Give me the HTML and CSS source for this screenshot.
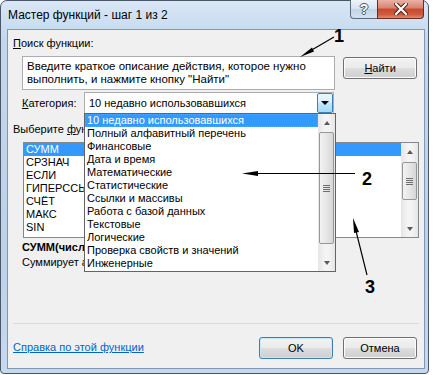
FILE: index.html
```html
<!DOCTYPE html>
<html lang="ru">
<head>
    <meta charset="UTF-8">
    <title>Мастер функций - шаг 1 из 2</title>
    <link rel="stylesheet" href="styles.css">
</head>
<body>
    <div class="dialog">
        <div class="titlebar">
            <span class="title">Мастер функций - шаг 1 из 2</span>
            <div class="caption-buttons">
                <span class="cap help">?</span>
                <span class="cap close">
                    <svg width="14" height="12" viewBox="0 0 14 12">
                        <path d="M2 1 L12 11 M12 1 L2 11" stroke="#4a2018" stroke-width="4.2" stroke-linecap="square"/>
                        <path d="M2 1 L12 11 M12 1 L2 11" stroke="#ffffff" stroke-width="2.2" stroke-linecap="square"/>
                    </svg>
                </span>
            </div>
        </div>

        <div class="client">
            <div class="label"><u>П</u>оиск функции:</div>

            <div class="search-row">
                <div class="textbox">Введите краткое описание действия, которое нужно выполнить, и нажмите кнопку "Найти"</div>
                <button class="btn find-btn"><u>Н</u>айти</button>
            </div>

            <div class="category-row">
                <span class="category-label"><u>К</u>атегория:</span>
                <div class="combo">
                    <span class="combo-text">10 недавно использовавшихся</span>
                    <span class="drop-btn"></span>
                </div>
            </div>

            <div class="label label-gap">Выберите <u>ф</u>ункцию:</div>

            <div class="listbox">
                <div class="items">
                    <div class="item selected">СУММ</div>
                    <div class="item">СРЗНАЧ</div>
                    <div class="item">ЕСЛИ</div>
                    <div class="item">ГИПЕРССЫЛКА</div>
                    <div class="item">СЧЁТ</div>
                    <div class="item">МАКС</div>
                    <div class="item">SIN</div>
                </div>
                <div class="scrollbar small">
                    <span class="arrow up"></span>
                    <div class="track"><div class="thumb"><span class="grip"></span></div></div>
                    <span class="arrow down"></span>
                </div>
            </div>

            <div class="signature">СУММ(число1;число2;...)</div>
            <div class="desc">Суммирует аргументы.</div>

            <div class="spacer"></div>
            <div class="separator"></div>

            <div class="footer">
                <a href="#" class="help-link">Справка по этой функции</a>
                <div class="buttons">
                    <button class="btn default">OK</button>
                    <button class="btn">Отмена</button>
                </div>
            </div>

            <!-- раскрытый список категорий поверх окна -->
            <div class="dropdown">
                <div class="items">
                    <div class="item selected focused">10 недавно использовавшихся</div>
                    <div class="item">Полный алфавитный перечень</div>
                    <div class="item">Финансовые</div>
                    <div class="item">Дата и время</div>
                    <div class="item">Математические</div>
                    <div class="item">Статистические</div>
                    <div class="item">Ссылки и массивы</div>
                    <div class="item">Работа с базой данных</div>
                    <div class="item">Текстовые</div>
                    <div class="item">Логические</div>
                    <div class="item">Проверка свойств и значений</div>
                    <div class="item">Инженерные</div>
                </div>
                <div class="scrollbar large">
                    <span class="arrow up"></span>
                    <div class="track"><div class="thumb"><span class="grip"></span></div></div>
                    <span class="arrow down"></span>
                </div>
            </div>
        </div>

        <!-- выноски 1, 2, 3 -->
        <svg class="callouts" width="430" height="374" viewBox="0 0 430 374">
            <g stroke="#000" stroke-width="1.2">
                <line x1="334" y1="37" x2="310" y2="51"/>
                <line x1="355" y1="173.5" x2="256" y2="173.5"/>
                <line x1="367" y1="275" x2="356" y2="231"/>
            </g>
            <g fill="#000">
                <polygon points="300,57 312,47.5 314,51.5"/>
                <polygon points="242,173.5 258,171 258,176"/>
                <polygon points="353,218 354,233 359,232"/>
            </g>
            <g class="callout-num">
                <text x="334" y="42">1</text>
                <text x="362" y="185">2</text>
                <text x="365" y="293">3</text>
            </g>
        </svg>
    </div>
</body>
</html>
```

FILE: styles.css
```css
/* общие */
body {
    margin: 0;
    background: #ffffff;
    font-family: "Liberation Sans", Arial, sans-serif;
    font-size: 11px;
    color: #000000;
}

u {
    text-decoration: underline;
    text-underline-offset: 1px;
}

/* рамка окна */
.dialog {
    position: relative;
    width: 429px;
    height: 374px;
    box-sizing: border-box;
    border: 1px solid #4b5766;
    border-radius: 7px 7px 4px 4px;
    padding: 0 3px 4px 6px;
    background: linear-gradient(#d9e7f6, #c3d7ee 40px, #bcd2ea 70%, #c5d9ef);
    display: flex;
    flex-direction: column;
}

.titlebar {
    height: 28px;
    display: flex;
    justify-content: space-between;
    align-items: flex-start;
}

.title {
    margin-top: 7px;
    margin-left: 1px;
    font-size: 12px;
    line-height: 15px;
}

.caption-buttons {
    display: flex;
    margin-top: -1px;
    margin-right: 1px;
}

.cap {
    height: 19px;
    box-sizing: border-box;
    border: 1px solid #5a6a80;
    border-top: none;
    display: flex;
    align-items: center;
    justify-content: center;
}

.help {
    width: 27px;
    border-radius: 0 0 0 4px;
    border-right: none;
    background: linear-gradient(#edf3fa, #d6e2ef 50%, #c3d3e6 51%, #d3e1ef);
    color: #ffffff;
    font-weight: bold;
    font-size: 14px;
    text-shadow: 1px 0 #445266, -1px 0 #445266, 0 1px #445266, 0 -1px #445266;
}

.close {
    width: 47px;
    border-radius: 0 0 4px 0;
    border-color: #6b2a22;
    background: linear-gradient(#eab2a6, #d9826f 45%, #c7482f 50%, #cf5a3e 80%, #e08d6a);
}

/* клиентская область */
.client {
    position: relative;
    flex: 1;
    border: 1px solid #8196b0;
    background: #f0f0f0;
    display: flex;
    flex-direction: column;
    padding: 6px 7px 9px 5px;
}

.label {
    line-height: 15px;
}

.label-gap {
    margin-top: 8px;
}

.search-row {
    display: flex;
    align-items: flex-start;
    margin-top: 5px;
    padding-left: 9px;
}

.textbox {
    width: 314px;
    height: 34px;
    box-sizing: border-box;
    border: 1px solid #abadb3;
    background: #ffffff;
    padding: 3px 4px;
    line-height: 13px;
    font-size: 11.5px;
}

.btn {
    width: 74px;
    height: 22px;
    box-sizing: border-box;
    border: 1px solid #707070;
    border-radius: 3px;
    background: linear-gradient(#f2f2f2, #ebebeb 50%, #dddddd 51%, #cfcfcf);
    font-family: inherit;
    font-size: 11px;
    color: #000000;
    padding: 0;
    box-shadow: inset 0 0 0 1px #fcfcfc;
}

.find-btn {
    margin-left: 8px;
    margin-top: 1px;
}

.category-row {
    display: flex;
    align-items: center;
    margin-top: 2px;
    padding-left: 9px;
}

.category-label {
    width: 62px;
}

.combo {
    width: 250px;
    height: 22px;
    box-sizing: border-box;
    border: 1px solid #abadb3;
    background: #ffffff;
    display: flex;
    align-items: center;
    justify-content: space-between;
    padding-left: 4px;
}

.drop-btn {
    position: relative;
    width: 16px;
    height: 20px;
    box-sizing: border-box;
    border: 1px solid #3c7fb1;
    border-radius: 2px;
    background: linear-gradient(#eaf6fd, #d9f0fc 45%, #bee6fd 50%, #a7d9f5);
}

.drop-btn::after {
    content: "";
    position: absolute;
    left: 3px;
    top: 7px;
    border-left: 4px solid transparent;
    border-right: 4px solid transparent;
    border-top: 4px solid #000000;
}

/* списки */
.listbox {
    width: 396px;
    height: 96px;
    box-sizing: border-box;
    margin-top: 5px;
    margin-left: 10px;
    border: 1px solid #828790;
    background: #ffffff;
    display: flex;
}

.items {
    flex: 1;
    overflow: hidden;
}

.item {
    height: 13px;
    line-height: 13px;
    padding-left: 2px;
    white-space: nowrap;
}

.item.selected {
    background: #3399ff;
    color: #ffffff;
}

.item.focused {
    box-sizing: border-box;
    border: 1px dotted #d88a3c;
    line-height: 11px;
    padding-left: 1px;
}

.scrollbar {
    width: 17px;
    display: flex;
    flex-direction: column;
    background: linear-gradient(90deg, #e6e6e6, #f4f4f4 40%, #f4f4f4 60%, #e6e6e6);
}

.arrow {
    height: 17px;
    display: flex;
    align-items: center;
    justify-content: center;
}

.arrow::after {
    content: "";
    border-left: 3.5px solid transparent;
    border-right: 3.5px solid transparent;
}

.arrow.up::after {
    border-bottom: 4px solid #5a5a5a;
}

.arrow.down::after {
    border-top: 4px solid #5a5a5a;
}

.track {
    flex: 1;
}

.thumb {
    margin: 0 1px;
    box-sizing: border-box;
    border: 1px solid #979797;
    border-radius: 2px;
    background: linear-gradient(90deg, #f2f2f2, #e6e6e6 50%, #d6d6d6);
    display: flex;
    align-items: center;
    justify-content: center;
}

.grip {
    width: 7px;
    height: 7px;
    background: repeating-linear-gradient(#6e6e6e 0 1px, transparent 1px 2px);
}

.small .thumb {
    margin-top: 2px;
    height: 38px;
}

.large .thumb {
    margin-top: 1px;
    height: 112px;
}

.signature {
    margin-top: 2px;
    margin-left: 9px;
    font-weight: bold;
    line-height: 15px;
}

.desc {
    margin-left: 9px;
    line-height: 15px;
}

.spacer {
    flex: 1;
}

.separator {
    height: 1px;
    margin-right: -2px;
    background: #d5dbe1;
    margin-bottom: 13px;
}

.footer {
    display: flex;
    justify-content: space-between;
    align-items: flex-start;
}

.help-link {
    color: #0066cc;
    line-height: 15px;
    margin-top: 3px;
}

.buttons {
    display: flex;
    gap: 10px;
}

.btn.default {
    border-color: #3c7fb1;
    box-shadow: inset 0 0 0 1px #c5e7fb;
}

/* раскрытый список */
.dropdown {
    position: absolute;
    left: 76px;
    top: 83px;
    width: 252px;
    height: 159px;
    box-sizing: border-box;
    border: 1px solid #646464;
    background: #ffffff;
    display: flex;
}

/* выноски */
.callouts {
    position: absolute;
    left: -1px;
    top: -1px;
    pointer-events: none;
}

.callout-num {
    font-family: "Liberation Sans", Arial, sans-serif;
    font-weight: bold;
    font-size: 18px;
}
```
